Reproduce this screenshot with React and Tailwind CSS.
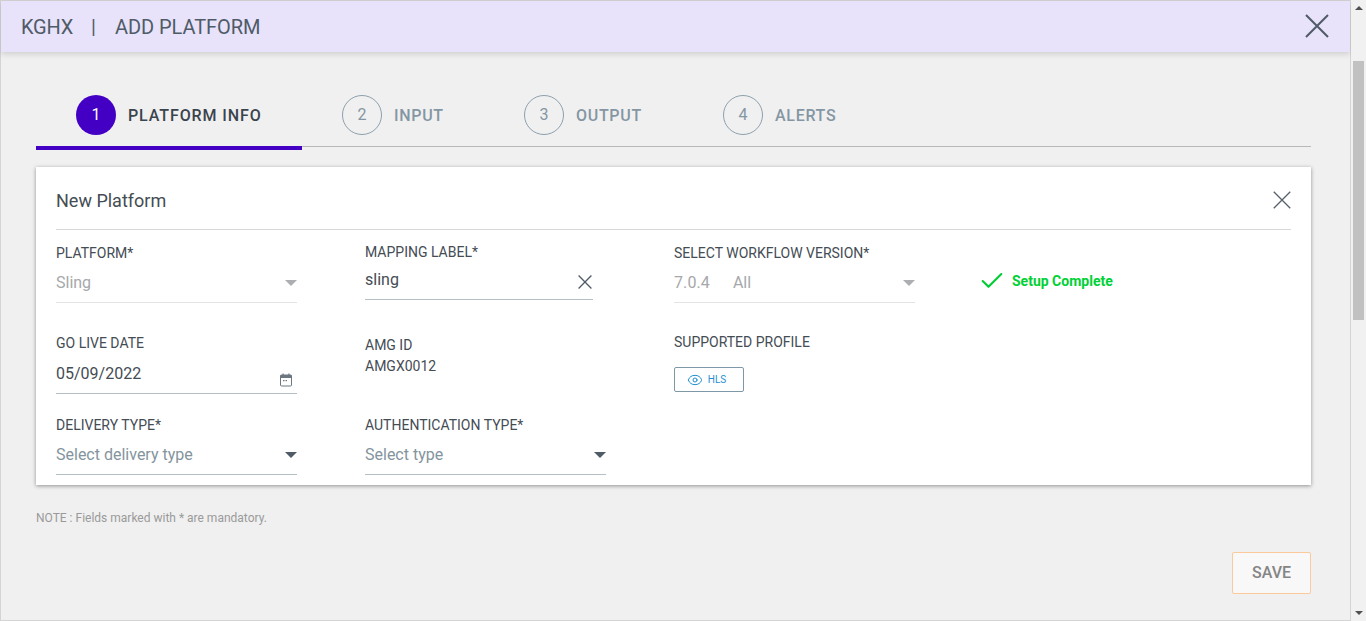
import React from 'react';
import { Check, Eye } from 'lucide-react';

const steps = [
  { n: 1, label: 'PLATFORM INFO', active: true, width: 'w-[266px]' },
  { n: 2, label: 'INPUT', width: 'w-[182px]' },
  { n: 3, label: 'OUTPUT', width: 'w-[199px]' },
  { n: 4, label: 'ALERTS', width: 'w-[200px]' },
];

const Caret = ({ className }) => (
  <span className={`w-0 h-0 mb-[4px] border-x-[6.5px] border-x-transparent border-t-[6px] ${className}`} />
);

const CloseIcon = ({ className, strokeWidth = 1.5 }) => (
  <svg viewBox="0 0 24 24" fill="none" stroke="currentColor" strokeWidth={strokeWidth} className={className}>
    <path d="M1 1 23 23M23 1 1 23" />
  </svg>
);

const CalendarIcon = ({ className }) => (
  <svg viewBox="0 0 14 14" fill="none" className={className}>
    <rect x="1.5" y="2" width="11" height="11" rx="1" stroke="currentColor" strokeWidth="1" />
    <rect x="1.5" y="2" width="11" height="3" fill="currentColor" />
    <rect x="3.5" y="0.5" width="1.2" height="2" fill="currentColor" />
    <rect x="9.3" y="0.5" width="1.2" height="2" fill="currentColor" />
    <rect x="4" y="7" width="1.5" height="1.2" fill="currentColor" />
    <rect x="6.5" y="7" width="1.5" height="1.2" fill="currentColor" />
  </svg>
);

const Field = ({ label, className = '', children }) => (
  <div className={`flex flex-col ${className}`}>
    <div className="h-[20px] text-[14px] leading-[20px] text-[#444c54]">{label}</div>
    {children}
  </div>
);

const SelectBox = ({ value, disabled, widthClass = 'w-[241px]' }) => (
  <div className={`mt-[4px] h-[36px] ${widthClass} flex items-center justify-between border-b ${disabled ? 'border-[#e2e3e5]' : 'border-[#b4c0c6]'}`}>
    <span className={`pb-[4px] text-[16px] ${disabled ? 'text-[#a6a8ab]' : 'text-[#84949e]'}`}>{value}</span>
    <Caret className={disabled ? 'border-t-[#acaeb1]' : 'border-t-[#4f5b66]'} />
  </div>
);

export default function App() {
  return (
    <div className="h-[621px] w-[1366px] overflow-hidden flex bg-[#f0f0f0] font-['Roboto',sans-serif]">
      <div className="w-[1351px] h-full flex flex-col border border-[#d4d4d4]">
        <header className="h-[51px] shrink-0 flex items-center justify-between pl-[20px] pr-[21px] bg-[#e8e2fb] shadow-[0_2px_6px_rgba(0,0,0,0.15)] text-[20px] text-[#4f5b66]">
          <div className="flex items-center">
            <span className="tracking-[-0.2px]">KGHX</span>
            <span className="ml-[18px]">|</span>
            <span className="ml-[19px] tracking-[-0.05px]">ADD PLATFORM</span>
          </div>
          <CloseIcon className="w-[24px] h-[24px] -mt-[2px]" strokeWidth={2} />
        </header>

        <main className="flex-1 pl-[35px] pr-[39px] relative">
          <div className="mt-[43px] h-[52px] flex border-b border-[#b8b8b8]">
            {steps.map((s) => (
              <div key={s.n} className={`${s.width} pl-10 h-[55px] flex items-start gap-[12px] ${s.active ? 'border-b-4 border-[#4300c4]' : ''}`}>
                <span className={`w-[40px] h-[40px] rounded-full flex items-center justify-center text-[16px] ${s.active ? 'bg-[#4300c4] text-white' : 'border border-[#8da0ad] text-[#8496a3]'}`}>
                  {s.n}
                </span>
                <span className={`h-[40px] pt-px flex items-center text-[16px] font-medium ${s.active ? 'tracking-[0.9px] text-[#3a444d]' : 'tracking-[0.7px] text-[#8496a3]'}`}>
                  {s.label}
                </span>
              </div>
            ))}
          </div>

          <section className="mt-[20px] h-[318px] bg-white shadow-[0_1px_4px_rgba(0,0,0,0.4)] px-[20px]">
            <div className="h-[63px] pt-[4px] flex items-center justify-between border-b border-[#d8d8d8]">
              <h2 className="text-[18px] font-normal text-[#444c54]">New Platform</h2>
              <CloseIcon className="w-[18px] h-[18px] text-[#55606b]" strokeWidth={1.75} />
            </div>

            <div className="mt-[13px] grid grid-cols-[309px_309px_308px_1fr] grid-rows-[90px_82px_60px]">
              <Field label="PLATFORM*">
                <SelectBox value="Sling" disabled />
              </Field>
              <Field label="MAPPING LABEL*" className="-mt-px">
                <div className="mt-[4px] h-[34px] w-[228px] flex items-center justify-between border-b border-[#b4c0c6]">
                  <span className="pb-[6px] text-[16px] text-[#444c54]">sling</span>
                  <CloseIcon className="w-[14px] h-[14px] mr-px -mt-[1px] text-[#4f5b66]" strokeWidth={2.25} />
                </div>
              </Field>
              <Field label="SELECT WORKFLOW VERSION*">
                <div className="mt-[4px] h-[36px] w-[241px] flex items-center border-b border-[#e2e3e5]">
                  <span className="pb-[4px] text-[16px] tracking-[0.1px] text-[#a6a8ab]">7.0.4</span>
                  <span className="pb-[4px] ml-[23px] text-[16px] text-[#a6a8ab]">All</span>
                  <Caret className="ml-auto border-t-[#acaeb1]" />
                </div>
              </Field>
              <div className="h-[76px] flex items-center -ml-[4px]">
                <Check className="w-[28px] h-[28px] text-[#00cc33]" strokeWidth={1.8} />
                <span className="ml-[6px] text-[14px] font-bold text-[#00d134]">Setup Complete</span>
              </div>

              <Field label="GO LIVE DATE">
                <div className="mt-[4px] h-[37px] w-[241px] flex justify-between border-b border-[#b4c0c6]">
                  <span className="text-[16px] leading-[34px] text-[#444c54]">05/09/2022</span>
                  <CalendarIcon className="w-[14px] h-[14px] mt-[16px] mr-[4px] text-[#6c7780]" />
                </div>
              </Field>
              <div className="flex flex-col text-[14px] leading-[21px] text-[#444c54] pt-[2px]">
                <span>AMG ID</span>
                <span>AMGX0012</span>
              </div>
              <Field label="SUPPORTED PROFILE" className="-mt-px">
                <button className="mt-[15px] w-[70px] h-[25px] flex items-center justify-center gap-[5px] pr-[5px] rounded-[2px] border border-[#7f98a8] bg-white text-[10px] text-[#1f8fd0]">
                  <Eye className="w-[16px] h-[16px]" strokeWidth={1.5} />
                  HLS
                </button>
              </Field>
              <div />

              <Field label="DELIVERY TYPE*">
                <SelectBox value="Select delivery type" />
              </Field>
              <Field label="AUTHENTICATION TYPE*">
                <SelectBox value="Select type" />
              </Field>
            </div>
          </section>

          <p className="mt-[25px] text-[12px] leading-[16px] text-[#9a9a9a]">NOTE : Fields marked with * are mandatory.</p>

          <div className="mt-[26px] flex justify-end">
            <button className="w-[79px] h-[42px] rounded-[2px] border border-[#fbc99a] bg-[#f8f8f8] text-[16px] font-medium text-[#858585]">
              SAVE
            </button>
          </div>
        </main>
      </div>

      <div className="w-[15px] h-full bg-[#f1f1f1] flex flex-col items-center justify-between py-[6px] relative">
        <span className="w-0 h-0 border-x-[4px] border-x-transparent border-b-[4px] border-b-[#505050]" />
        <span className="w-0 h-0 border-x-[4px] border-x-transparent border-t-[4px] border-t-[#505050]" />
        <div className="absolute left-[2px] top-[61px] w-[11px] h-[259px] bg-[#c1c1c1]" />
      </div>
    </div>
  );
}
